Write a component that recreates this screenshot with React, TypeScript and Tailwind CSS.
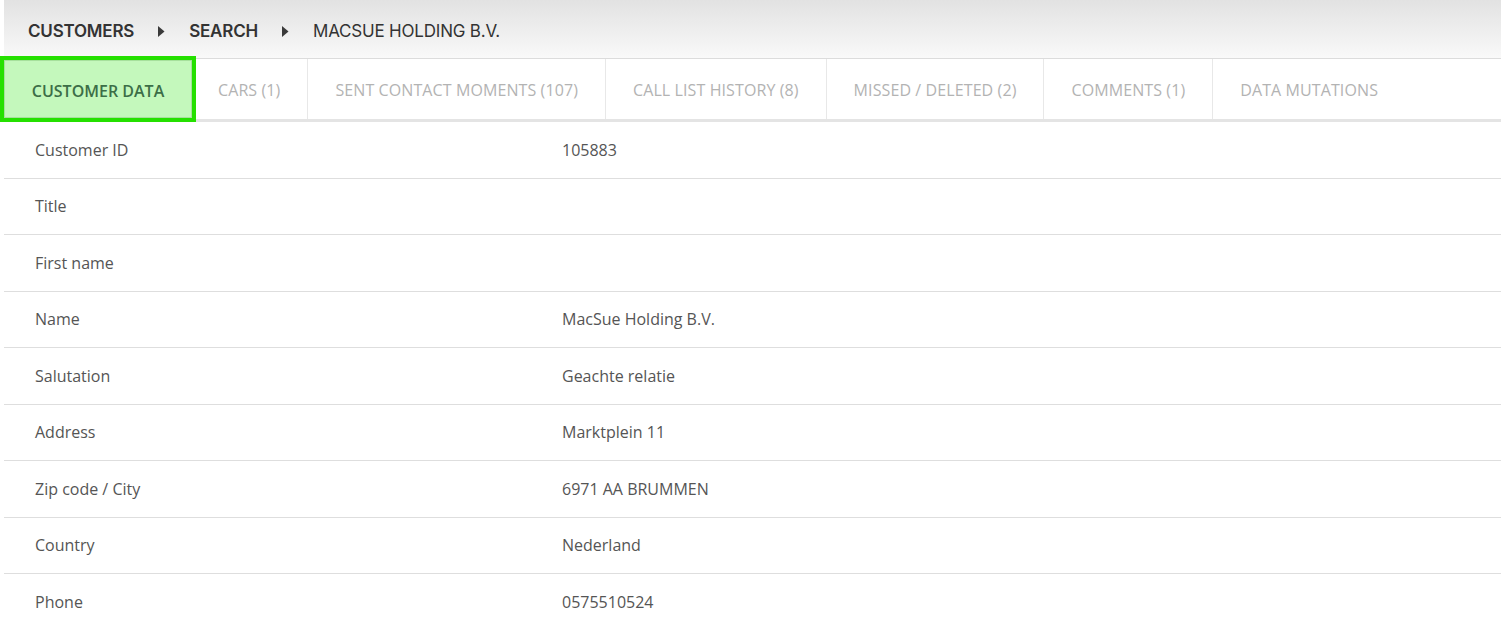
import React from "react";

const tabs = [
  "CUSTOMER DATA",
  "CARS (1)",
  "SENT CONTACT MOMENTS (107)",
  "CALL LIST HISTORY (8)",
  "MISSED / DELETED (2)",
  "COMMENTS (1)",
  "DATA MUTATIONS",
];

const rows: [string, string][] = [
  ["Customer ID", "105883"],
  ["Title", ""],
  ["First name", ""],
  ["Name", "MacSue Holding B.V."],
  ["Salutation", "Geachte relatie"],
  ["Address", "Marktplein 11"],
  ["Zip code / City", "6971 AA BRUMMEN"],
  ["Country", "Nederland"],
  ["Phone", "0575510524"],
];

function Caret() {
  return (
    <svg width="7" height="11" viewBox="0 0 7 11" className="mx-[24px]">
      <path d="M0 0 L6.5 5.5 L0 11 Z" fill="#3a3a3a" />
    </svg>
  );
}

export default function App() {
  return (
    <div className="w-[1501px] h-[619px] overflow-hidden bg-white font-['Open_Sans',sans-serif]">
      <div className="ml-[4px] h-[59px] bg-gradient-to-b from-[#e2e2e2] to-[#f9f9f9] border-b border-[#dcdcdc] flex items-center pl-[24px] pt-[5px] text-[17px] text-[#333] font-['Inter',sans-serif] tracking-[-0.2px]">
        <span className="font-semibold">CUSTOMERS</span>
        <Caret />
        <span className="font-semibold">SEARCH</span>
        <Caret />
        <span className="font-normal">MACSUE HOLDING B.V.</span>
      </div>
      <div className="flex h-[63px] border-b-[3px] border-[#e4e4e4] relative">
        {tabs.map((t, i) =>
          i === 0 ? (
            <div
              key={t}
              className="relative z-10 h-[66px] -mt-[3px] -mb-[3px] w-[196px] shrink-0 flex items-center justify-center pt-[3px] border-4 border-[#25e000] bg-[#c4f8bc] text-[#3c6e47] text-[16px] font-semibold shadow-[inset_0_0_0_1px_#a6e09c]"
            >
              {t}
            </div>
          ) : (
            <div
              key={t}
              className={`flex items-center pt-[2px] tracking-[0.1px] ${i === 1 ? "pl-[22px] pr-[27px]" : "px-[27px]"} ${i === tabs.length - 1 ? "" : "border-r border-[#e8e8e8]"} text-[16px] text-[#b3b3b3]`}
            >
              {t}
            </div>
          )
        )}
      </div>
      <div className="ml-[4px]">
        {rows.map(([k, v]) => (
          <div
            key={k}
            className="h-[56.5px] flex items-center border-b border-[#dedede] text-[16px] text-[#555]"
          >
            <div className="w-[558px] pl-[31px]">{k}</div>
            <div>{v}</div>
          </div>
        ))}
      </div>
    </div>
  );
}
